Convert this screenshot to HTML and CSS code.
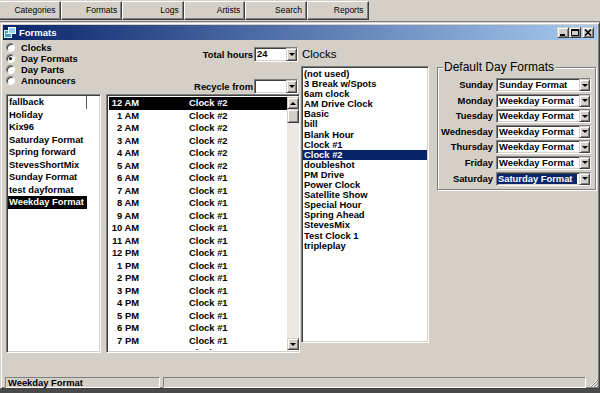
FILE: index.html
```html
<!DOCTYPE html>
<html lang="en">
<head>
  <meta charset="UTF-8" />
  <title>Formats</title>
  <link rel="stylesheet" href="styles.css">
</head>
<body>
  <!-- MAIN TOOLBAR -->
  <div class="toolbar">
    <div class="tb-btn">Categories</div>
    <div class="tb-btn">Formats</div>
    <div class="tb-btn">Logs</div>
    <div class="tb-btn">Artists</div>
    <div class="tb-btn">Search</div>
    <div class="tb-btn">Reports</div>
  </div>

  <!-- MDI CHILD WINDOW -->
  <div class="window">
    <div class="titlebar">
      <svg class="app-icon" width="12" height="11" viewBox="0 0 12 11">
        <rect x="0.5" y="3.5" width="7" height="7" fill="#4a9cc8" stroke="#d8f0ff" />
        <rect x="4.5" y="0.5" width="7" height="6" fill="#8fd0ee" stroke="#fff" />
        <rect x="2" y="6" width="4" height="1" fill="#fff" />
      </svg>
      <span class="title">Formats</span>
      <div class="caption-btns">
        <div class="cap-btn">
          <svg width="8" height="7" viewBox="0 0 8 7"><rect x="1" y="5" width="5" height="2" fill="#000" /></svg>
        </div>
        <div class="cap-btn">
          <svg width="8" height="7" viewBox="0 0 8 7"><path d="M0.5 0.5h7v6h-7z" fill="none" stroke="#000" /><rect x="0" y="0" width="8" height="2" fill="#000" /></svg>
        </div>
        <div class="cap-btn close">
          <svg width="8" height="7" viewBox="0 0 8 7"><path d="M1 0.5l6 6M7 0.5l-6 6" stroke="#000" stroke-width="1.6" /></svg>
        </div>
      </div>
    </div>

    <div class="client">
      <!-- left: mode + day formats -->
      <div class="col col-left">
        <div class="radios">
          <div class="radio"><i></i>Clocks</div>
          <div class="radio checked"><i></i>Day Formats</div>
          <div class="radio"><i></i>Day Parts</div>
          <div class="radio"><i></i>Announcers</div>
        </div>
        <div class="listbox list-formats">
          <div class="fmt first">fallback</div>
          <div class="fmt">Holiday</div>
          <div class="fmt">Kix96</div>
          <div class="fmt">Saturday Format</div>
          <div class="fmt">Spring forward</div>
          <div class="fmt">StevesShortMix</div>
          <div class="fmt">Sunday Format</div>
          <div class="fmt">test dayformat</div>
          <div class="fmt sel">Weekday Format</div>
        </div>
      </div>

      <!-- middle: hour grid -->
      <div class="col col-mid">
        <div class="field">
          <label>Total hours</label>
          <div class="combo combo-hours"><span class="combo-text">24</span><span class="combo-btn"></span></div>
        </div>
        <div class="field field-recycle">
          <label>Recycle from</label>
          <div class="combo combo-hours"><span class="combo-text"></span><span class="combo-btn"></span></div>
        </div>
        <div class="grid">
          <div class="grid-rows">
            <div class="grow sel"><span class="hr">12 AM</span><span class="ck">Clock #2</span></div>
            <div class="grow"><span class="hr">1 AM</span><span class="ck">Clock #2</span></div>
            <div class="grow"><span class="hr">2 AM</span><span class="ck">Clock #2</span></div>
            <div class="grow"><span class="hr">3 AM</span><span class="ck">Clock #2</span></div>
            <div class="grow"><span class="hr">4 AM</span><span class="ck">Clock #2</span></div>
            <div class="grow"><span class="hr">5 AM</span><span class="ck">Clock #2</span></div>
            <div class="grow"><span class="hr">6 AM</span><span class="ck">Clock #1</span></div>
            <div class="grow"><span class="hr">7 AM</span><span class="ck">Clock #1</span></div>
            <div class="grow"><span class="hr">8 AM</span><span class="ck">Clock #1</span></div>
            <div class="grow"><span class="hr">9 AM</span><span class="ck">Clock #1</span></div>
            <div class="grow"><span class="hr">10 AM</span><span class="ck">Clock #1</span></div>
            <div class="grow"><span class="hr">11 AM</span><span class="ck">Clock #1</span></div>
            <div class="grow"><span class="hr">12 PM</span><span class="ck">Clock #1</span></div>
            <div class="grow"><span class="hr">1 PM</span><span class="ck">Clock #1</span></div>
            <div class="grow"><span class="hr">2 PM</span><span class="ck">Clock #1</span></div>
            <div class="grow"><span class="hr">3 PM</span><span class="ck">Clock #1</span></div>
            <div class="grow"><span class="hr">4 PM</span><span class="ck">Clock #1</span></div>
            <div class="grow"><span class="hr">5 PM</span><span class="ck">Clock #1</span></div>
            <div class="grow"><span class="hr">6 PM</span><span class="ck">Clock #1</span></div>
            <div class="grow"><span class="hr">7 PM</span><span class="ck">Clock #1</span></div>
            <div class="grow"><span class="hr">8 PM</span><span class="ck">Clock #1</span></div>
          </div>
          <div class="vscroll">
            <span class="sb-btn up"></span>
            <span class="sb-thumb"></span>
            <span class="sb-track"></span>
            <span class="sb-btn down"></span>
          </div>
        </div>
      </div>

      <!-- clocks list -->
      <div class="col col-clocks">
        <div class="heading">Clocks</div>
        <div class="listbox list-clocks">
          <div class="clk">(not used)</div>
          <div class="clk">3 Break w/Spots</div>
          <div class="clk">6am clock</div>
          <div class="clk">AM Drive Clock</div>
          <div class="clk">Basic</div>
          <div class="clk">bill</div>
          <div class="clk">Blank Hour</div>
          <div class="clk">Clock #1</div>
          <div class="clk sel">Clock #2</div>
          <div class="clk">doubleshot</div>
          <div class="clk">PM Drive</div>
          <div class="clk">Power Clock</div>
          <div class="clk">Satellite Show</div>
          <div class="clk">Special Hour</div>
          <div class="clk">Spring Ahead</div>
          <div class="clk">StevesMix</div>
          <div class="clk">Test Clock 1</div>
          <div class="clk">tripleplay</div>
        </div>
      </div>

      <!-- default day formats -->
      <div class="col col-days">
        <fieldset class="group">
          <legend>Default Day Formats</legend>
          <div class="day-rows">
            <label>Sunday</label>
            <div class="combo"><span class="combo-text">Sunday Format</span><span class="combo-btn"></span></div>
            <label>Monday</label>
            <div class="combo"><span class="combo-text">Weekday Format</span><span class="combo-btn"></span></div>
            <label>Tuesday</label>
            <div class="combo"><span class="combo-text">Weekday Format</span><span class="combo-btn"></span></div>
            <label>Wednesday</label>
            <div class="combo"><span class="combo-text">Weekday Format</span><span class="combo-btn"></span></div>
            <label>Thursday</label>
            <div class="combo"><span class="combo-text">Weekday Format</span><span class="combo-btn"></span></div>
            <label>Friday</label>
            <div class="combo"><span class="combo-text">Weekday Format</span><span class="combo-btn"></span></div>
            <label>Saturday</label>
            <div class="combo"><span class="combo-text sel">Saturday Format</span><span class="combo-btn"></span></div>
          </div>
        </fieldset>
      </div>
    </div>

    <!-- STATUS BAR -->
    <div class="statusbar">
      <div class="sb-panel first">Weekday Format</div>
      <div class="sb-panel wide"></div>
      <svg class="grip" width="9" height="10" viewBox="0 0 9 10">
        <path d="M8 2L1 9M8 5L4 9M8 8L7 9" stroke="#fff" stroke-width="1" />
        <path d="M9 2L2 9M9 5L5 9M9 8L8 9" stroke="#808080" stroke-width="1" />
      </svg>
    </div>
  </div>
  <div class="desk-edge"></div>
</body>
</html>
```

FILE: styles.css
```css
:root {
  --face: #d4d0c8;
  --shadow: #808080;
  --dark: #404040;
  --hilite: #fff;
  --navy: #0a246a;
  --sans: "Liberation Sans", Arial, sans-serif;
}
/* RESET & BASE */
* { margin:0; padding:0; box-sizing:border-box; }
html, body { width:600px; height:393px; overflow:hidden; }
body {
  background:var(--face); color:#000;
  font-family:var(--sans); font-size:9.4px; font-weight:bold;
  display:flex; flex-direction:column;
}

/* 3D EDGES */
.tb-btn, .cap-btn, .combo-btn, .sb-btn, .sb-thumb {
  background:var(--face);
  border:1px solid; border-color:var(--face) var(--dark) var(--dark) var(--face);
  box-shadow:inset 1px 1px var(--hilite), inset -1px -1px var(--shadow);
}
.combo, .listbox, .grid {
  background:#fff;
  border:1px solid; border-color:var(--shadow) var(--hilite) var(--hilite) var(--shadow);
  box-shadow:inset 1px 1px var(--dark), inset -1px -1px var(--face);
}

/* TOOLBAR */
.toolbar {
  flex:none; height:22px; padding-top:1px; display:flex;
  border-bottom:1px solid var(--shadow);
}
.tb-btn {
  width:61.6px; height:19px; padding-right:4px; text-align:right;
  font:normal 8.5px/17px var(--sans);
  border-color:var(--hilite) var(--dark) var(--dark) var(--hilite);
  box-shadow:inset -1px -1px var(--shadow);
}
.tb-btn:first-child { margin-left:-1px; }

/* WINDOW */
.window {
  flex:none; height:367px; display:flex; flex-direction:column;
  padding:2px 2px 0 2px;
  border:1px solid; border-color:var(--face) var(--dark) var(--dark) var(--face);
  box-shadow:inset 1px 1px var(--hilite), inset -1px -1px var(--shadow);
}
.titlebar {
  flex:none; height:15px; display:flex; align-items:center; padding-left:1px;
  background:linear-gradient(to right, var(--navy), #a6caf0); color:#fff;
}
.app-icon { flex:none; }
.title { font:bold 9.5px var(--sans); margin-left:3px; }
.caption-btns { margin-left:auto; margin-right:3px; display:flex; }
.cap-btn {
  width:12px; height:11px; display:flex; align-items:center; justify-content:center;
}
.cap-btn.close { margin-left:1px; }

/* CLIENT AREA */
.client { flex:1; display:flex; padding-left:3px; }
.col { display:flex; flex-direction:column; flex:none; }

.col-left { width:95px; padding-top:2px; }
.radio { height:11px; display:flex; align-items:center; line-height:11px; }
.radio i {
  width:9px; height:9px; margin-right:6px; border-radius:50%; background:#fff; position:relative;
  border:1px solid; border-color:var(--shadow) var(--hilite) var(--hilite) var(--shadow);
  box-shadow:inset 1px 1px var(--dark);
}
.radio.checked i::after {
  content:''; position:absolute; left:2px; top:2px; width:3px; height:3px;
  border-radius:50%; background:#000;
}

.listbox { overflow:hidden; }
.list-formats { margin-top:8px; height:259px; padding:1px; }
.fmt { width:79px; line-height:12.5px; padding-left:1px; white-space:nowrap; }
.fmt.first { box-shadow:inset -1px 0 #555; }
.fmt.sel, .grow.sel { background:#000; color:#fff; }

/* HOUR GRID */
.col-mid { width:194px; margin-left:5px; padding-top:7px; }
.field { height:15px; display:flex; justify-content:flex-end; align-items:center; gap:1px; padding-right:2px; }
.field-recycle { margin-top:17px; }
.combo { display:flex; height:14px; }
.combo-hours { width:44px; height:15px; }
.combo-text { flex:1; padding:0 0 0 2px; line-height:11px; white-space:nowrap; overflow:hidden; }
.combo-text.sel { background:var(--navy); color:#fff; margin:1px 2px 1px 0; padding-left:1px; line-height:9px; }
.combo-btn { flex:none; width:11px; display:flex; align-items:center; justify-content:center; }
.combo-btn::after, .sb-btn.down::after {
  content:''; border-top:3px solid #000; border-left:3px solid transparent; border-right:3px solid transparent;
}

.grid { height:259px; display:flex; padding:2px 0 2px 2px; }
.grid-rows { flex:1; overflow:hidden; }
.grow { display:flex; height:12.5px; line-height:12.5px; white-space:nowrap; }
.grow .hr { width:30px; text-align:right; }
.grow .ck { margin-left:50px; }

.vscroll { width:12px; flex:none; display:flex; flex-direction:column; background:#ebe9e4; }
.sb-btn { height:12px; flex:none; display:flex; align-items:center; justify-content:center; }
.sb-btn.up::after {
  content:''; border-bottom:3px solid #000; border-left:3px solid transparent; border-right:3px solid transparent;
}
.sb-thumb { height:14px; flex:none; }
.sb-track { flex:1; }

/* CLOCKS LIST */
.col-clocks { width:128px; margin-left:1px; padding-top:7px; }
.heading { height:15px; padding-left:1px; font:normal 11.5px/15px var(--sans); }
.list-clocks { margin-top:4px; height:277px; padding:2px 0 0 1px; }
.clk { line-height:10.1px; padding-left:1px; white-space:nowrap; }
.clk.sel { background:var(--navy); color:#fff; margin-right:1px; }

/* DEFAULT DAY FORMATS */
.col-days { width:159px; margin-left:8px; padding-top:21px; }
.group {
  border:1px solid var(--shadow);
  box-shadow:inset 1px 1px var(--hilite), 1px 1px var(--hilite);
}
.group legend {
  margin-left:5px; padding:0 1px; background:var(--face);
  font:normal 12px/13px var(--sans);
}
.day-rows {
  display:grid; grid-template-columns:1fr 95px; grid-auto-rows:14px;
  column-gap:3px; row-gap:1.6px; padding:4px 4px 3px 0;
}
.day-rows label { text-align:right; line-height:13px; }

/* STATUS BAR */
.statusbar { flex:none; height:12px; display:flex; gap:3px; padding:1px 0 0 2px; }
.sb-panel {
  border:1px solid; border-color:var(--shadow) var(--hilite) var(--hilite) var(--shadow);
  line-height:9px; padding-left:2px; white-space:nowrap;
}
.sb-panel.first { width:155px; }
.sb-panel.wide { flex:1; }
.grip { flex:none; align-self:flex-end; margin-right:-1px; }

.desk-edge { flex:1; background:#4a4a4a; }
```
